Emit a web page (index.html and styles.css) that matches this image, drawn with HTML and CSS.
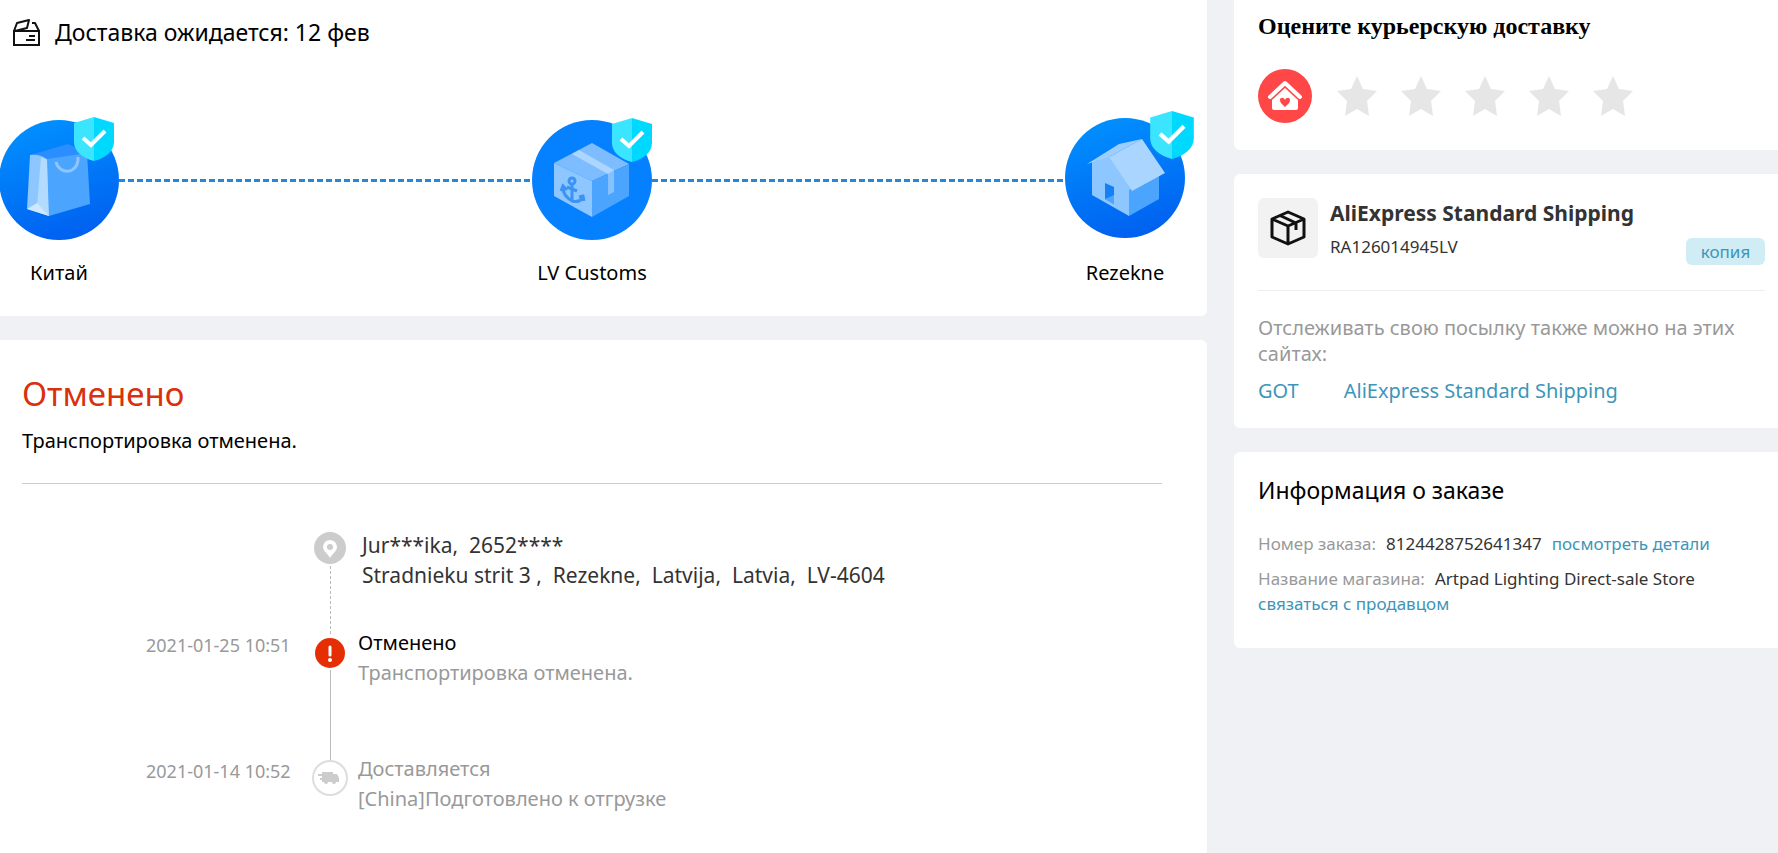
FILE: index.html
```html
<!DOCTYPE html>
<html lang="ru">
<head>
<meta charset="utf-8">
<title>Отслеживание посылки</title>
<link rel="stylesheet" href="styles.css">
</head>
<body>
<svg class="defs" width="0" height="0" aria-hidden="true">
  <defs>
    <linearGradient id="blue" x1="0.3" y1="0" x2="0.6" y2="1"><stop offset="0" stop-color="#0090ff"/><stop offset="1" stop-color="#0060f0"/></linearGradient>
    <symbol id="shield" viewBox="0 0 40 44">
      <path d="M20 0 40 6V25C40 34 32 41 20 44Z" fill="#00d9ff"/>
      <path d="M20 0 0 6V25C0 34 8 41 20 44Z" fill="#3be5ff"/>
      <path d="m9 21 8 7L31 14" fill="none" stroke="#fff" stroke-width="4"/>
    </symbol>
    <symbol id="star" viewBox="0 0 40 40"><path d="m20 0 6 13 14 2-10 10 2 15-12-7-12 7 2-15L0 15l14-2Z" fill="#e6e6e6"/></symbol>
  </defs>
</svg>
<div class="page">
  <main class="main">
    <section class="card route">
      <h1 class="eta">
        <svg class="eta-icon" viewBox="0 0 27 27" fill="none" stroke="#111" stroke-width="2"><path d="M1 12V26H26V12Z"/><path d="M1 12 4 4 16 1 14 9 2 12M19 4H22L26 12" stroke-linejoin="round"/><path d="M16 17h6M13 21h9"/></svg>
        Доставка ожидается: 12 фев
      </h1>
      <div class="track">
        <div class="stop">
          <svg class="stop-icon" viewBox="0 0 120 120">
            <circle cx="60" cy="60" r="60" fill="url(#blue)"/>
            <path d="M31 35 69 24 87 32 88 35 48 40Z" fill="#2b8dff"/>
            <path d="M31 35Q42 34 49 40L50 96 28 89Z" fill="#8ec6ff"/>
            <path d="M42 37 49 40 50 96 38 86Z" fill="#b3daff"/>
            <path d="M28 89 38 83 50 96Z" fill="#cde8ff"/>
            <path d="M48 39 88 33 91 84 50 96Z" fill="#4ba5ff"/>
            <path d="M57 42C60 55 80 55 79 37" fill="none" stroke="#8ec6ff" stroke-width="3"/>
            <use href="#shield" x="75" y="-3" width="40" height="44"/>
          </svg>
          <span class="stop-name">Китай</span>
        </div>
        <div class="link-line"></div>
        <div class="stop">
          <svg class="stop-icon" viewBox="0 0 120 120">
            <circle cx="60" cy="60" r="60" fill="#0580ff"/>
            <path d="M22 43 60 23 97 44 60 61Z" fill="#7dbdff"/>
            <path d="M22 43 60 61V97L22 76Z" fill="#8ec6ff"/>
            <path d="M60 61 97 44V76L60 97Z" fill="#4ba5ff"/>
            <path d="M40 34 47 30 82 50V54L76 54Z" fill="#add6ff"/>
            <path d="M76 54 82 50V72L76 75Z" fill="#85c1ff"/>
            <g fill="none" stroke="#3b94f5" stroke-width="3"><circle cx="40" cy="61" r="3"/><path d="M40 64V81M35 67 45 71M31 67Q31 76 40 81 47 83 51 78M29 71 31 66 35 70M47 77 51 76 52 81"/></g>
            <use href="#shield" x="80" y="-2" width="40" height="44"/>
          </svg>
          <span class="stop-name">LV Customs</span>
        </div>
        <div class="link-line"></div>
        <div class="stop">
          <svg class="stop-icon" viewBox="0 0 120 120">
            <circle cx="60" cy="58" r="60" fill="url(#blue)"/>
            <path d="M27 42 44 36 66 69 64 72V96L27 75Z" fill="#8ec6ff"/>
            <path d="M64 70 94 54V79L64 96Z" fill="#4ba5ff"/>
            <path d="M22 44 54 24 77 19 44 37Z" fill="#9ccdff"/>
            <path d="M44 37 77 19 100 53 67 71Z" fill="#aad5ff"/>
            <path d="M40 63 49 67V84L40 79Z" fill="#1580f5"/>
            <path d="M40 79 49 75V84Z" fill="#4ba5ff"/>
            <use href="#shield" x="85" y="-9" width="44" height="48"/>
          </svg>
          <span class="stop-name">Rezekne</span>
        </div>
      </div>
    </section>

    <section class="card status">
      <header class="status-head">
        <h2 class="status-title">Отменено</h2>
        <p class="status-text">Транспортировка отменена.</p>
      </header>
      <ol class="timeline">
        <li class="event event-address">
          <span class="event-date"></span>
          <div class="marker">
            <svg width="32" height="32" viewBox="0 0 32 32"><circle cx="16" cy="16" r="16" fill="#ccc"/><path d="M16 8a7 7 0 0 1 7 7c0 4-5 7-7 11-2-4-7-7-7-11a7 7 0 0 1 7-7Z" fill="#fff"/><circle cx="16" cy="15" r="3" fill="#ccc"/></svg>
            <span class="rail rail-dashed"></span>
          </div>
          <address class="event-body address">Jur***ika,&nbsp; 2652****<br>Stradnieku strit 3 ,&nbsp; Rezekne,&nbsp; Latvija,&nbsp; Latvia,&nbsp; LV-4604</address>
        </li>
        <li class="event event-cancelled">
          <time class="event-date">2021-01-25 10:51</time>
          <div class="marker">
            <svg width="30" height="30" viewBox="0 0 30 30"><circle cx="15" cy="15" r="15" fill="#e62e04"/><path d="M15 9v8" stroke="#fff" stroke-width="3" stroke-linecap="round"/><circle cx="15" cy="22" r="2" fill="#fff"/></svg>
            <span class="rail"></span>
          </div>
          <div class="event-body"><strong class="event-name">Отменено</strong><p>Транспортировка отменена.</p></div>
        </li>
        <li class="event">
          <time class="event-date">2021-01-14 10:52</time>
          <div class="marker">
            <svg width="36" height="36" viewBox="0 0 36 36"><circle cx="18" cy="18" r="17" fill="#fff" stroke="#ddd" stroke-width="2"/><path d="M10 12H21V14H25L27 18V22H24a2 2 0 0 1-4 0H16a2 2 0 0 1-4 0H10V20H8V18H10V16H6V14H10Z" fill="#ccc"/></svg>
          </div>
          <div class="event-body"><p>Доставляется</p><p>[China]Подготовлено к отгрузке</p></div>
        </li>
      </ol>
    </section>
  </main>

  <aside class="side">
    <section class="card rating">
      <h2 class="rating-title">Оцените курьерскую доставку</h2>
      <div class="rating-row">
        <svg class="rating-logo" viewBox="0 0 54 54"><circle cx="27" cy="27" r="27" fill="#ff4747"/><path d="m12 28 15-14 15 14" fill="none" stroke="#fff" stroke-width="4" stroke-linecap="round" stroke-linejoin="round"/><path d="M27 19 40 31V39Q40 41 38 41H16Q14 41 14 39V31Z" fill="#fff"/><path d="M27 38C24 35 22 34 22 31 22 28 26 28 27 31 28 28 32 28 32 31 32 34 30 35 27 38Z" fill="#ff4747"/></svg>
        <div class="stars">
          <button class="star" aria-label="1"><svg viewBox="0 0 40 40"><use href="#star"/></svg></button>
          <button class="star" aria-label="2"><svg viewBox="0 0 40 40"><use href="#star"/></svg></button>
          <button class="star" aria-label="3"><svg viewBox="0 0 40 40"><use href="#star"/></svg></button>
          <button class="star" aria-label="4"><svg viewBox="0 0 40 40"><use href="#star"/></svg></button>
          <button class="star" aria-label="5"><svg viewBox="0 0 40 40"><use href="#star"/></svg></button>
        </div>
      </div>
    </section>

    <section class="card carrier">
      <div class="carrier-head">
        <span class="carrier-logo"><svg width="36" height="36" viewBox="0 0 36 36" fill="none" stroke="#111" stroke-width="3" stroke-linejoin="round"><path d="M18 2 34 9V27L18 34 2 27V9ZM2 9 18 16 34 9M18 16V34M10 5.500 26 13V20"/></svg></span>
        <div class="carrier-info">
          <h2 class="carrier-name">AliExpress Standard Shipping</h2>
          <p class="carrier-code">RA126014945LV</p>
        </div>
        <button class="copy">копия</button>
      </div>
      <p class="carrier-note">Отслеживать свою посылку также можно на этих сайтах:</p>
      <nav class="carrier-links"><a href="#got">GOT</a><a href="#standard">AliExpress Standard Shipping</a></nav>
    </section>

    <section class="card order">
      <h2 class="order-title">Информация о заказе</h2>
      <div class="order-row"><span class="order-label">Номер заказа:</span><span>8124428752641347</span><a class="details" href="#details">посмотреть детали</a></div>
      <div class="order-row"><span class="order-label">Название магазина:</span><span>Artpad Lighting Direct-sale Store</span></div>
      <a class="contact" href="#contact">связаться с продавцом</a>
    </section>
  </aside>
</div>
</body>
</html>
```

FILE: styles.css
```css
* { box-sizing: border-box; }
body {
  margin: 0;
  background: #eff1f5;
  color: #000;
  font-family: "Noto Sans", "Open Sans", sans-serif;
  font-size: 20px;
}
h1, h2, p, ol { margin: 0; padding: 0; font-weight: 400; }
a { color: #3d95b8; text-decoration: none; }
button { border: 0; padding: 0; font: inherit; cursor: pointer; }
.defs { position: absolute; }

.page { display: flex; gap: 27px; min-height: 100vh; overflow: hidden; }
.main { flex: 1; display: flex; flex-direction: column; gap: 24px; min-width: 0; }
.side { width: 544px; display: flex; flex-direction: column; gap: 24px; }
.card { background: #fff; border-radius: 6px; }

.route { padding: 16px 22px 27px 0; border-radius: 0 0 6px 0; }
.eta { display: flex; align-items: center; gap: 15px; padding-left: 13px; font-size: 23px; line-height: 32px; }
.eta-icon { width: 27px; height: 27px; }
.track { display: flex; margin: 72px 0 0 -1px; }
.stop { width: 120px; display: flex; flex-direction: column; align-items: center; gap: 17px; }
.stop-icon { width: 120px; height: 120px; overflow: visible; }
.stop-name { line-height: 32px; white-space: nowrap; }
.link-line {
  flex: 1;
  height: 3px;
  margin-top: 59px;
  background: repeating-linear-gradient(90deg, #2388dc 0 6px, transparent 6px 9px);
}

.status { flex: 1; padding: 32px 45px 24px 22px; border-radius: 0 6px 0 0; }
.status-head { padding-bottom: 27px; border-bottom: 1px solid #ccc; }
.status-title { color: #d9300d; font-size: 33px; line-height: 44px; }
.status-text { margin-top: 10px; line-height: 30px; }
.timeline { list-style: none; padding: 46px 0 0 124px; }
.event { display: flex; color: #999; line-height: 30px; }
.event-address { height: 98px; }
.event-cancelled { height: 126px; }
.event-date { width: 142px; padding-top: 2px; margin-right: 24px; font-size: 18px; white-space: nowrap; }
.marker { width: 36px; margin-right: 10px; padding-top: 6px; display: flex; flex-direction: column; align-items: center; }
.event-address .marker { padding-top: 2px; }
.event-cancelled .marker { padding-top: 10px; }
.marker svg { flex: none; }
.rail { flex: 1; border-left: 1px solid #bbb; margin: 2px 0 -6px; }
.rail-dashed { border-left-style: dashed; }
.address { padding-left: 4px; color: #333; font-size: 21px; font-style: normal; }
.event-name { color: #000; font-weight: 400; }

.rating { padding: 11px 24px 27px; border-radius: 0 0 0 6px; }
.rating-title { font: bold 24px/30px "Liberation Serif", "Times New Roman", serif; }
.rating-row { display: flex; align-items: center; gap: 25px; margin-top: 28px; }
.rating-logo { width: 54px; height: 54px; }
.stars { display: flex; gap: 24px; }
.star { width: 40px; height: 40px; background: none; }
.star svg { display: block; }

.carrier { padding: 24px 13px 21px 24px; border-radius: 6px 0 0 6px; }
.carrier-head { display: flex; gap: 12px; padding-bottom: 25px; border-bottom: 1px solid #eee; }
.carrier-logo { width: 60px; height: 60px; display: flex; align-items: center; justify-content: center; background: #f2f2f2; border-radius: 6px; }
.carrier-info { flex: 1; color: #333; }
.carrier-name { font-size: 21px; font-weight: 700; line-height: 30px; }
.carrier-code { font-size: 17px; line-height: 37px; }
.copy { align-self: flex-end; width: 79px; height: 27px; background: #d0ecf5; color: #3d95b8; border-radius: 6px; font-size: 17px; line-height: 27px; }
.carrier-note { margin-top: 24px; color: #999; line-height: 26px; }
.carrier-links { display: flex; gap: 45px; margin-top: 8px; line-height: 32px; }

.order { padding: 22px 24px 32px; border-radius: 6px 0 0 6px; font-size: 17px; color: #333; }
.order-title { color: #000; font-size: 23px; line-height: 32px; }
.order-row { display: flex; gap: 10px; line-height: 35px; white-space: nowrap; }
.order-title + .order-row { margin-top: 20px; }
.order-label { color: #999; }
.contact { display: block; line-height: 24px; margin-top: -4px; }
```
